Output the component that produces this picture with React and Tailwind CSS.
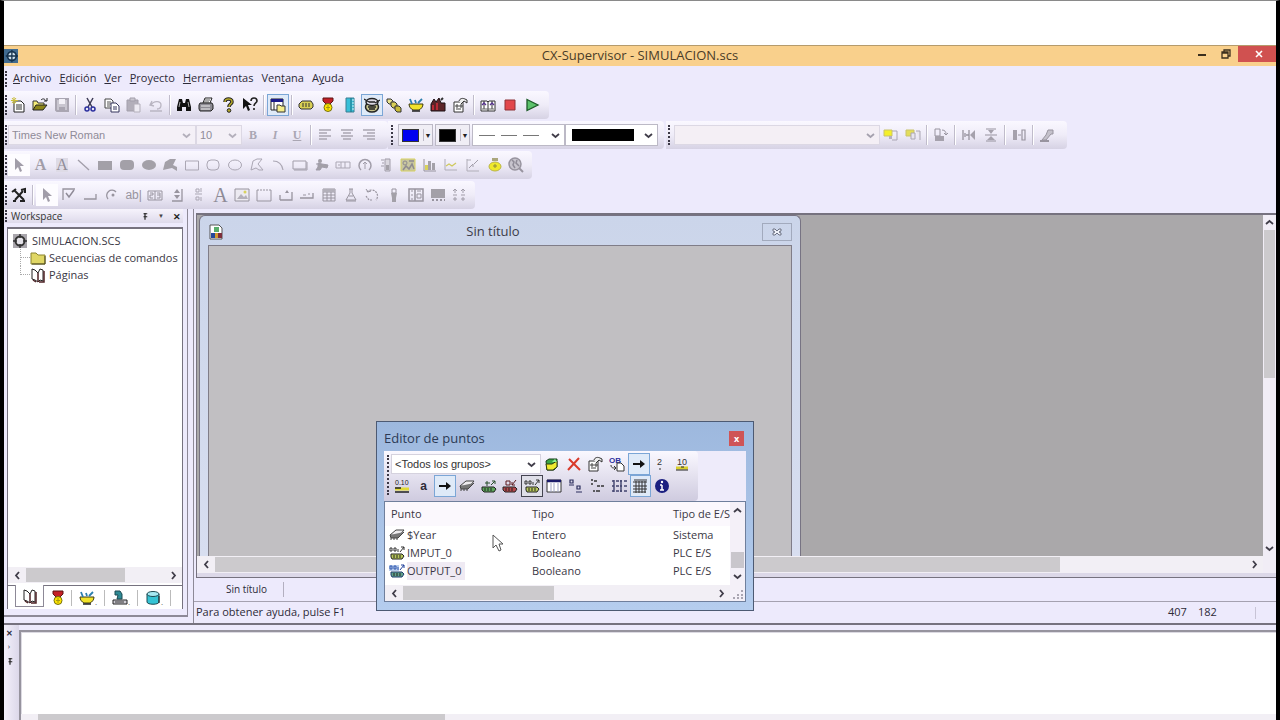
import React, { useState } from 'react';

// 16x16 glyphs, keyed by command
const GLYPHS = {
  new: <><path d="M4 4h7l3 3v8H4z" fill="#fff" stroke="#222" /><path d="M6 8h6M6 10h6M6 12h6" stroke="#333" /><path d="M4 0v7M1 3.500h7M2 1l4 5M6 1L2 6" stroke="#c9bd3a" /></>,
  open: <><path d="M1 13V4h4l1 2h6v3" fill="#f4ec7a" stroke="#333" /><path d="M1 13l3-5h11l-4 5z" fill="#8d8618" stroke="#222" /><path d="M9 3c2-2 4-1 5 1M15 1v3h-3" fill="none" stroke="#222" /></>,
  save: <><path d="M2 2h12v12H3l-1-1z" fill="#c9c6d0" stroke="#aaa6b2" strokeWidth="2" /><path d="M5 2h6v5H5z" fill="#f3f1f7" /><path d="M5 10h6v4H5z" fill="#a9a5b1" /></>,
  cut: <><path d="M5 1l5 9M11 1L6 10" stroke="#3c3a55" strokeWidth="1.500" /><circle cx="5" cy="12" r="2" fill="none" stroke="#2b2f9e" strokeWidth="1.500" /><circle cx="11" cy="12" r="2" fill="none" stroke="#2b2f9e" strokeWidth="1.500" /></>,
  copy: <><path d="M1 2h6l2 2v7H1z" fill="#fff" stroke="#444" /><path d="M3 5h4M3 7h4M3 9h3" stroke="#555" /><path d="M7 6h5l3 3v6H7z" fill="#fff" stroke="#34345c" /><path d="M9 10h4M9 12h4" stroke="#34345c" /></>,
  paste: <><path d="M1 3h11v11H1z" fill="#b3afba" stroke="#a39fab" /><path d="M4 1h5v3H4z" fill="#c9c6cf" stroke="#a39fab" /><path d="M8 7h6v8H8z" fill="#eeebf3" stroke="#b3afba" /></>,
  undo: <path d="M4 4L2 8l4 1M3 8c3-5 10-4 10 0 0 3-2 4-4 4M2 14h12" fill="none" stroke="#b9b5c2" strokeWidth="1.300" />,
  find: <><path d="M3 2h3l1 4h2l1-4h3l2 8v4h-5v-4H6v4H1v-4z" fill="#111" /><path d="M4 5l-1 5M12 5l1 5" stroke="#aaa" /></>,
  print: <><path d="M5 6l2-5h7l-2 5" fill="#fff" stroke="#222" /><path d="M7 3h5M6 5h5" stroke="#555" /><path d="M2 6h12l1 2v4l-2 2H2l-1-2V8z" fill="#8c8a92" stroke="#222" /><path d="M3 9h9M3 12h9" stroke="#eee" /></>,
  help: <><path d="M5 5c0-4 7-4 7 0 0 2-3 2-3 5" fill="none" stroke="#222" strokeWidth="3.500" /><path d="M5 5c0-4 7-4 7 0 0 2-3 2-3 5" fill="none" stroke="#b5a92a" strokeWidth="1.500" /><circle cx="9" cy="13.500" r="1.800" fill="#b5a92a" stroke="#222" /></>,
  context: <><path d="M1 1v11l3-3 2 5 2-1-2-5h4z" fill="#111" /><path d="M9 4c0-4 6-4 6 0 0 2-3 2-3 5M12 11v2" fill="none" stroke="#222" strokeWidth="1.600" /></>,
  workspace: <><path d="M1 2h12v11H1z" fill="#fff" stroke="#222" /><path d="M1 2h12v3H1z" fill="#1b1b8a" /><path d="M4 5v8" stroke="#222" /><path d="M7 8h3l1 1h4v6H7z" fill="#f5ee8a" stroke="#333" /></>,
  tag: <><path d="M4 4h9l2 3v3l-2 2H3l-2-2V7z" fill="#d9cf55" stroke="#333" /><path d="M5 6v4M8 6v4M11 6v4" stroke="#333" /></>,
  medal: <><path d="M3 1h10v3l-3 3H6L3 4z" fill="#c42127" stroke="#5c1414" /><circle cx="8" cy="10.500" r="4" fill="#ffe500" stroke="#75700f" /><path d="M8 8v5M6 10.500h4" stroke="#a59a10" /></>,
  strip: <><path d="M4 1h8v14H4z" fill="#38bfd8" stroke="#3a7f92" /><path d="M9 1v14" stroke="#1b6f82" /><path d="M10 3h2M10 6h2M10 9h2M10 12h2" stroke="#d9f4fa" /></>,
  database: <><ellipse cx="8" cy="10" rx="6.500" ry="5" fill="#c6c289" stroke="#222" strokeWidth="1.500" /><ellipse cx="8" cy="5" rx="6" ry="3.500" fill="#dedbe6" stroke="#222" strokeWidth="1.500" /><path d="M0 2l5 3M16 3l-5 3M5 5h6M4 10h8M5 12h6" stroke="#222" strokeWidth="1.300" /></>,
  chain: <><path d="M1 2h4l2 2v3H3L1 5z" fill="#eae48f" stroke="#333" /><path d="M5 5h4l2 2v4H7L5 9z" fill="#d9cf55" stroke="#333" /><path d="M9 9h4l2 2v4h-4l-2-2z" fill="#c9bd3a" stroke="#333" /></>,
  bowl: <><path d="M1 7h14c0 3-2 5-4 6H5C3 12 1 10 1 7z" fill="#f2e32a" stroke="#3d3a10" /><path d="M4 7L2 2M8 6L7 3M10 6l4-4" stroke="#2c7fae" strokeWidth="1.800" /><path d="M4 14h8" stroke="#222" strokeWidth="1.500" /></>,
  factory: <><path d="M1 7l3-5 2 3 3-4 2 5h4v8H1z" fill="#5c2428" stroke="#1c1114" /><path d="M3 8v5M7 6v7" stroke="#b82a35" strokeWidth="2" /><path d="M11 3l2-2" stroke="#333" strokeWidth="2" /></>,
  props: <><path d="M2 5h9v10H2z" fill="#fff" stroke="#333" /><path d="M4 8h2v2H4zM8 8h2v2H8zM4 12h5" fill="none" stroke="#444" /><path d="M7 4c1-3 4-3 6-2l2 1v3l-3-2-3 3" fill="#eee" stroke="#333" /></>,
  compile: <><path d="M1 4h6l1 1 1-1h6v10H1z" fill="#fff" stroke="#333" /><path d="M8 4v10M4 4v8M12 4v8" stroke="#333" /><path d="M2 8l2-2 2 2M10 8l2-2 2 2" fill="none" stroke="#55308f" strokeWidth="1.300" /><path d="M2 12h12" stroke="#666" /></>,
  stop: <path d="M3 3h10v10H3z" fill="#e2474a" stroke="#8d3236" />,
  play: <path d="M3 2.500l11 5.500-11 5.500z" fill="#5cc26b" stroke="#1d5a28" strokeWidth="1.300" />,
  alignLeft: <path d="M2 3h12M2 6h8M2 9h12M2 12h8" stroke="#aaa6b3" strokeWidth="1.300" />,
  alignCenter: <path d="M2 3h12M4 6h8M2 9h12M4 12h8" stroke="#aaa6b3" strokeWidth="1.300" />,
  alignRight: <path d="M2 3h12M6 6h8M2 9h12M6 12h8" stroke="#aaa6b3" strokeWidth="1.300" />,
  front: <><path d="M9 4h5v9H9" fill="none" stroke="#aaa6b3" /><path d="M1 3h8v6H1z" fill="#f4ef2a" stroke="#c9c36a" /><path d="M6 9h3v3H6z" fill="#b5b1bd" /></>,
  back: <><path d="M1 3h8v6H1z" fill="#e3dd5a" stroke="#c9c36a" /><path d="M6 6h4v6H6zM11 4h4v9" fill="#e8e5ee" stroke="#aaa6b3" /></>,
  rotate: <><path d="M2 2h5v7H2z" fill="none" stroke="#98949f" /><path d="M2 9h9v5H2z" fill="#a5a1ac" /><path d="M9 3c3 0 4 2 4 4M11 6l2 2 2-2" fill="none" stroke="#98949f" /></>,
  flipH: <><path d="M2 3v10M8 3v10M4 6v4M5 8h3" fill="none" stroke="#98949f" strokeWidth="1.300" /><path d="M14 3v10L9 8z" fill="#a5a1ac" /></>,
  flipV: <><path d="M2 8h12M3 14h10M3 2h10" fill="none" stroke="#98949f" strokeWidth="1.200" /><path d="M5 3h6L8 7zM8 9l4 4H4z" fill="#a5a1ac" /></>,
  spread: <><path d="M2 3h4v10H2z" fill="#a5a1ac" /><path d="M11 3h3v10h-3zM7 8h3" fill="none" stroke="#98949f" strokeWidth="1.200" /></>,
  dropper: <><path d="M9 3h5v4h-2l-5 6H3l4-5z" fill="#c4c1cb" stroke="#98949f" /><path d="M1 14h9" stroke="#98949f" strokeWidth="2" /></>,
  pointer: <path d="M4 1v12l3-3 2 5 2-1-2-5h4z" fill="#a19da9" />,
  line: <path d="M2 3l11 10" stroke="#a19da9" strokeWidth="1.300" />,
  rectFill: <path d="M1 4h14v9H1z" fill="#a3a0a8" />,
  roundFill: <rect x="1" y="3" width="14" height="10" rx="4" fill="#a3a0a8" />,
  ellipseFill: <ellipse cx="8" cy="8" rx="7" ry="5" fill="#a3a0a8" />,
  polyFill: <path d="M3 5l5-3h6l-3 6 4 2v4l-5-3-9 2z" fill="#a3a0a8" />,
  rect: <path d="M1.500 4h13v9h-13z" fill="none" stroke="#aba7b4" />,
  round: <rect x="2" y="3" width="12" height="10" rx="4" fill="none" stroke="#aba7b4" />,
  ellipse: <ellipse cx="8" cy="8" rx="6.500" ry="5" fill="none" stroke="#aba7b4" />,
  poly: <path d="M2 13l2-9 4-2h5l-4 5 5 6h-4l-3-2z" fill="none" stroke="#aba7b4" />,
  arc: <path d="M3 4c6 0 9 3 10 9" fill="none" stroke="#aba7b4" strokeWidth="1.200" />,
  button: <path d="M1 4h13v8H1zM15 5v8H2" fill="none" stroke="#a19da9" />,
  toggle: <><circle cx="6" cy="4" r="2" fill="#a3a0a8" /><path d="M4 6l4 1 6 1-1 3-5-1-2 3H2l2-3z" fill="#a3a0a8" stroke="#a19da9" /><path d="M2 7h4" stroke="#a19da9" /></>,
  slider: <path d="M1 5h14v6H1zM6 5v6M10 5v6M3 8h2" fill="none" stroke="#aba7b4" />,
  gauge: <><path d="M4 13a6 6 0 118 0" fill="none" stroke="#a19da9" strokeWidth="1.500" /><path d="M8 12V5M6 7l2-2 2 2" fill="none" stroke="#a19da9" /></>,
  level: <><path d="M7 2h5v12H7z" fill="#dad7df" stroke="#a19da9" /><path d="M8 8h3v5H8z" fill="#a3a0a8" /><path d="M3 3h3M4 6h2M3 9h3" stroke="#a19da9" /></>,
  alarm: <><path d="M1 2h14v12H1z" fill="#c8c6a0" stroke="#d6d060" /><circle cx="5" cy="6" r="2" fill="none" stroke="#8f8b8f" /><path d="M9 4h5M3 13l3-4 3 3 3-5 2 5" fill="none" stroke="#8f8b8f" strokeWidth="1.500" /></>,
  chart: <><path d="M2 2v12h12" fill="none" stroke="#98949f" /><path d="M3 8h3v5H3z" fill="#d8d25c" /><path d="M6 4h3v9H6zM10 6h3v7h-3z" fill="#a3a0a8" /></>,
  trend: <><path d="M2 2v11h12" fill="none" stroke="#b0adb8" /><path d="M3 9l3-2 3 2 4-3" fill="none" stroke="#cfc95e" strokeWidth="1.300" /></>,
  scatter: <><path d="M2 2v12h12M2 3h4" fill="none" stroke="#b0adb8" /><path d="M4 11l4-4v3M9 7l4-4" fill="none" stroke="#a19da9" /></>,
  bag: <><path d="M5 1h6v3H5z" fill="#aaa67c" /><ellipse cx="8" cy="9.500" rx="6" ry="4.500" fill="#efe92a" stroke="#b9b44a" /><path d="M6 9h4M8 7v4" stroke="#8f8b3f" /></>,
  web: <><circle cx="7" cy="7" r="6" fill="#c7c4cd" stroke="#98949f" strokeWidth="1.500" /><path d="M4 3l2 2-1 3 2 3M9 3l-1 3 3 3" fill="none" stroke="#8f8b97" strokeWidth="1.500" /><path d="M11 11l4 4" stroke="#98949f" strokeWidth="2" /></>,
  tools: <><path d="M3 3l10 10M12 4L4 13" stroke="#222" strokeWidth="2" /><path d="M1 5l4-3M10 3l4-1v4M9 14h5M2 14h3" fill="none" stroke="#222" strokeWidth="2" /></>,
  check: <><path d="M2 13V2h12" fill="none" stroke="#98949f" strokeWidth="1.300" /><path d="M5 6l3 4 5-7" fill="none" stroke="#8f8b97" strokeWidth="1.500" /></>,
  push: <path d="M2 12h12V7" fill="none" stroke="#98949f" strokeWidth="1.300" />,
  radio: <><path d="M4 12a5 5 0 018-7" fill="none" stroke="#98949f" strokeWidth="1.300" /><circle cx="9" cy="8" r="1.500" fill="#98949f" /></>,
  group: <><path d="M1 4h14v9H1zM8 4v9" fill="none" stroke="#98949f" /><path d="M3 6h3v2H3v3h3M10 6h3v5h-3M10 8h3" fill="none" stroke="#98949f" /></>,
  spin: <><path d="M3 14h10V2" fill="none" stroke="#98949f" strokeWidth="1.300" /><path d="M8 2l3 4H5zM8 12l3-4H5z" fill="#98949f" /></>,
  updown: <path d="M5 2h3v3H5zM10 1v4M5 10h3v3H5zM10 10v4M4 7h7" fill="none" stroke="#aba7b4" />,
  image: <><path d="M1 2h14v12H1z" fill="#eceaf1" stroke="#98949f" /><path d="M3 12l4-5 3 3 2-2 2 4z" fill="#b3b0ba" /><circle cx="11" cy="5" r="1.500" fill="#d8d25c" /></>,
  frame: <path d="M1 14V3h2M15 14V3h-2M4 3h2M7 3h2M10 3h2M1 14h14" fill="none" stroke="#98949f" />,
  tabUp: <><path d="M2 13V8M2 13h12V5" fill="none" stroke="#98949f" strokeWidth="1.300" /><path d="M9 3l2 3H7z" fill="#98949f" /></>,
  tabRow: <><path d="M1 11h13V6" fill="none" stroke="#98949f" strokeWidth="1.300" /><path d="M4 8h3M9 7h2" stroke="#98949f" /></>,
  grid: <><path d="M2 2h12v12H2zM2 5h12M2 8h12M2 11h12M6 5v9M10 5v9" fill="none" stroke="#98949f" /><path d="M2 2h12v3H2z" fill="#b3b0ba" /></>,
  flask: <path d="M6 2h4M7 2v4l-4 7h10L9 6V2M6 9h4M3 14h10" fill="none" stroke="#98949f" />,
  dial: <><path d="M3 5a6 6 0 119 8M2 9l3 4h4" fill="none" stroke="#98949f" strokeDasharray="2 1" strokeWidth="1.200" /><path d="M2 2l2 3 3-1" fill="none" stroke="#98949f" /></>,
  thermo: <><path d="M6 2h4v4H6z" fill="none" stroke="#98949f" /><path d="M5 6h6l-1 5v4H6v-4z" fill="#a3a0a8" /></>,
  panel: <><path d="M1 2h14v12H1zM7 2v12" fill="none" stroke="#98949f" strokeWidth="1.500" /><path d="M9 4h4M9 7h4v4H9zM3 4h2M3 8h2M3 12h2" fill="none" stroke="#98949f" /></>,
  film: <><path d="M1 2h14v9H1z" fill="#a3a0a8" /><path d="M2 13h2M6 13h2M10 13h2M14 13h1" stroke="#98949f" strokeWidth="2" /></>,
  arrows: <path d="M2 4l2-2 2 2M4 2v4M10 4l2-2 2 2M12 2v4M2 8h4M10 8h4M2 12h4M4 10v4M10 12h4M12 10v4" fill="none" stroke="#a19da9" />,
  cycle: <><path d="M2 5l3-2h8v8l-3 3H3z" fill="#3aa545" stroke="#173d1b" /><path d="M2 8h6l5-3v6l-4 3H3z" fill="#f0ea2f" stroke="#2c3a10" /><path d="M8 6l3-3 2 3z" fill="#8df08d" /></>,
  remove: <path d="M3 3l11 11M13 2L2 14" stroke="#d93a2b" strokeWidth="2" />,
  rename: <><text x="0" y="7" fontSize="8" fontFamily="Liberation Sans, sans-serif" fontWeight="700" fill="#2b2f9e">OB</text><path d="M2 9c0 3 2 3 4 3M5 10l2 2-2 2" fill="none" stroke="#333" /><path d="M8 7h4l3 3v5H8z" fill="#fff" stroke="#333" /></>,
  arrow: <><path d="M2 8h8" stroke="#111" strokeWidth="2" /><path d="M9 4l5 4-5 4z" fill="#111" /></>,
  two: <><text x="5" y="9" fontSize="9" fontFamily="Liberation Sans, sans-serif" fill="#333">2</text><path d="M7 13h2" stroke="#333" /></>,
  ten: <><text x="3" y="9" fontSize="9" fontFamily="Liberation Sans, sans-serif" fill="#333">10</text><path d="M2 12h12" stroke="#d8cf2c" strokeWidth="3" /><path d="M2 14h12M7 11h3" stroke="#222" /></>,
  real: <><text x="1" y="7" fontSize="7" fontFamily="Liberation Sans, sans-serif" fill="#222">0.10</text><path d="M1 11h14" stroke="#e2da34" strokeWidth="3" /><path d="M1 10h6M1 14h14" stroke="#222" strokeWidth="1.500" /></>,
  memory: <><path d="M1 8l6-5h8l-5 6z" fill="#eeecef" stroke="#444" /><path d="M1 8l1 3h7l6-6" fill="#777" stroke="#444" /><path d="M2 11v2M5 11v2M8 11v2" stroke="#444" /></>,
  input: <><path d="M1 9h12l2 2-2 3H3l-2-2z" fill="#5da55a" stroke="#222" /><path d="M4 5h5M6 3v5M10 7l4-4M11 3h3v3" fill="none" stroke="#284f2a" /><path d="M4 10v3M7 10v3M10 10v3" stroke="#222" /></>,
  output: <><path d="M1 9h12l2 2-2 3H3l-2-2z" fill="#b5484c" stroke="#222" /><path d="M4 3h4v4H4zM14 2l-4 5M10 4v3h3" fill="none" stroke="#5c1b1e" /><path d="M4 10v3M7 10v3M10 10v3" stroke="#222" /></>,
  io: <><path d="M2 9h11l2 2-2 3H3l-1-2z" fill="#b8c85a" stroke="#222" /><path d="M1 3h2v3H1zM5 3h2v3H5zM9 4v3M11 7l4-5M12 2h3v3" fill="none" stroke="#333" /><path d="M5 10v3M8 10v3M11 10v3" stroke="#222" /></>,
  ioSel: <><path d="M2 9h11l2 2-2 3H3l-1-2z" fill="#5fa08a" stroke="#1d3a6e" /><path d="M1 3h2v3H1zM5 3h2v3H5zM9 4v3M11 7l4-5M12 2h3v3" fill="none" stroke="#1f3f9a" /><path d="M0 2h10v6H0z" fill="#4d7fd0" opacity=".4" /><path d="M5 10v3M8 10v3M11 10v3" stroke="#222" /></>,
  table: <><path d="M1 2h14v12H1z" fill="#fff" stroke="#333" /><path d="M1 3h14" stroke="#1b1b6a" strokeWidth="2.500" /><path d="M5 5v9M8 5v9M12 5v9" stroke="#9fa3c4" /></>,
  largeIcons: <path d="M3 2h3v3H3zM2 7h5M10 8h3v3h-3zM9 14h6" fill="none" stroke="#2b2d5c" strokeWidth="1.200" />,
  smallIcons: <path d="M2 2h2M5 3h3M2 6h2M8 8h3M12 8h3M4 13h2M7 13h4" stroke="#333" strokeWidth="1.500" />,
  list: <path d="M1 3h2M5 3h3M9 3h2M13 3h3M1 8h2M5 8h3M9 8h2M13 8h3M1 13h2M5 13h3M9 13h2M13 13h3M3 2v12M10 2v12" stroke="#41436e" strokeWidth="1.400" />,
  details: <path d="M2 2h13M1 4h14M1 8h14M1 11h14M1 14h13M4 3v12M7 3v12M10 3v12M13 3v12" stroke="#333" />,
  info: <><circle cx="8" cy="8" r="7" fill="#1b1f80" /><path d="M8 7v5M6 7h2M6 12h4" stroke="#fff" strokeWidth="1.500" /><circle cx="8" cy="4" r="1.200" fill="#fff" /></>,
  project: <><path d="M1 1h14v14H1z" fill="#a9a6ac" /><circle cx="8" cy="8" r="4.500" fill="#e4e2e8" stroke="#333" strokeWidth="2" /><path d="M8 1v4M8 11v4M1 8h4M11 8h4" stroke="#333" strokeWidth="1.500" /></>,
  folder: <><path d="M1 3h5l2 2h7v9H1z" fill="#e0d765" stroke="#8a8430" /><path d="M15 6v8H2" fill="none" stroke="#4a4720" /></>,
  book: <><path d="M2 2l3 1 3 3 2-4 3 1v11l-3-1-2 2-3-2-3-1z" fill="#fff" stroke="#222" /><path d="M8 6v9M14 4v11H9M3 13l3 2" fill="none" stroke="#4d2226" strokeWidth="1.500" /></>,
  device: <><path d="M1 10h14v4H1z" fill="#d0ced6" stroke="#222" /><path d="M3 1h5l2 3v5H5l1-4H3z" fill="#2f8a94" stroke="#1d4a52" /><path d="M3 12h9" stroke="#333" /></>,
  cylinder: <><path d="M2 4v8c0 3 12 3 12 0V4" fill="#35c3d4" stroke="#1d4a52" /><ellipse cx="8" cy="4" rx="6" ry="2.500" fill="#a5e9f2" stroke="#1d4a52" /><path d="M14 6v7" stroke="#222" /></>,
  page: <><path d="M2 1h9l3 3v11H2z" fill="#fff" stroke="#555" /><path d="M3 9h4v5H3z" fill="#24489a" /><path d="M6 3h5v5H6z" fill="#58ad6a" /><path d="M7 9h3v5H7z" fill="#d1992f" /><path d="M10 9h4v5h-4z" fill="#7d2f3c" /></>,
  app: <><path d="M0 0h16v16H0z" fill="#416b90" /><circle cx="9" cy="8" r="5" fill="#cfe0ec" stroke="#16334e" strokeWidth="2" /><path d="M9 1v14M2 8h14" stroke="#16334e" strokeWidth="1.500" /></>,
  pin: <path d="M8 4v5M6 9h5M8 9v4M6 5h5" stroke="#222" strokeWidth="1.600" />,
};

function Glyph({ name, size = 'size-4' }) {
  return <svg viewBox="0 0 16 16" className={`${size} shrink-0`} aria-hidden="true">{GLYPHS[name]}</svg>;
}

function Tool({ name, pressed, children }) {
  const look = pressed === 'blue' ? 'border-[#7ba6d6] bg-[#dfeaf8]'
    : pressed === 'dark' ? 'border-[#444450] bg-[#dfdfe8]'
    : pressed === 'light' ? 'border-transparent bg-[#fdfcff]'
    : 'border-transparent';
  return (
    <button type="button" aria-label={name} className={`flex h-[22px] w-[22px] min-w-0 shrink items-center justify-center border ${look}`}>
      {children || <Glyph name={name} />}
    </button>
  );
}

const Sep = () => <span className="mx-[2px] h-5 w-[2px] shrink-0 border-l border-[#c0bccb] bg-white" />;

const Grip = ({ className = 'h-5' }) => <span className={`w-0 shrink-0 border-l-2 border-dotted border-[#3b3846] ${className}`} />;

function Bar({ children, className = '' }) {
  return (
    <div className={`flex h-7 items-center rounded-r bg-linear-to-b from-[#faf8ff] via-[#efecf8] to-[#d6d2e4] ${className}`}>
      {children}
    </div>
  );
}

function Chevron({ dir, className = 'text-[#3f3c48]' }) {
  const paths = { left: 'M6 1L3 4.500 6 8', right: 'M3 1l3 3.500L3 8', up: 'M1 6l3.500-3L8 6', down: 'M1 3l3.500 3L8 3' };
  return (
    <svg viewBox="0 0 9 9" className={`size-[9px] shrink-0 ${className}`} aria-hidden="true">
      <path d={paths[dir]} fill="none" stroke="currentColor" strokeWidth="1.800" />
    </svg>
  );
}

function HScroll({ thumb, className = '' }) {
  return (
    <div className={`flex items-center bg-[#f2eff5] ${className}`}>
      <button type="button" aria-label="Desplazar a la izquierda" className="flex w-[18px] shrink-0 justify-center"><Chevron dir="left" /></button>
      <div className="flex h-full flex-1 items-stretch">
        <div className={`my-px bg-[#cccacd] ${thumb}`} />
      </div>
      <button type="button" aria-label="Desplazar a la derecha" className="flex w-[18px] shrink-0 justify-center"><Chevron dir="right" /></button>
    </div>
  );
}

function Combo({ label, value, options, onChange, className, children, chevron = 'text-[#3f3c48]' }) {
  return (
    <div className={`relative flex items-center border ${className}`}>
      <select aria-label={label} value={value} onChange={onChange} className="h-full w-full appearance-none pl-[3px] outline-none">
        {options.map(o => <option key={o} value={o}>{o}</option>)}
      </select>
      <span className="pointer-events-none absolute inset-y-0 left-1 flex items-center">{children}</span>
      <span className="pointer-events-none absolute inset-y-0 right-1 flex items-center"><Chevron dir="down" className={chevron} /></span>
    </div>
  );
}

function ColorButton({ label, color }) {
  return (
    <button type="button" aria-label={label} className="mr-[2px] flex h-[22px] w-[35px] shrink-0 items-center border border-[#bcb9c6] bg-[#f0eef5] pl-[3px]">
      <span className={`h-[13px] w-[17px] border border-[#333] ${color}`} />
      <span className="ml-1 flex h-3 flex-1 items-center justify-center border-l border-[#bcb9c6] text-[7px] leading-none text-[#222]">▼</span>
    </button>
  );
}

const MENU = [['', 'A', 'rchivo'], ['', 'E', 'dición'], ['', 'V', 'er'], ['', 'P', 'royecto'], ['', 'H', 'erramientas'], ['Ven', 't', 'ana'], ['A', 'y', 'uda']];

const DRAW_TOOLS = ['line', 'rectFill', 'roundFill', 'ellipseFill', 'polyFill', 'rect', 'round', 'ellipse', 'poly', 'arc', 'button', 'toggle', 'slider', 'gauge', 'level', 'alarm', 'chart', 'trend', 'scatter', 'bag', 'web'];

const CONTROLS_A = ['check', 'push', 'radio'];
const CONTROLS_B = ['group', 'spin', 'updown'];
const CONTROLS_C = ['image', 'frame', 'tabUp', 'tabRow', 'grid', 'flask', 'dial', 'thermo', 'panel', 'film', 'arrows'];

function Toolbars() {
  const [font, setFont] = useState('Times New Roman');
  const [size, setSize] = useState('10');

  return (
    <div className="flex flex-col gap-[2px] font-['Liberation_Sans',sans-serif] text-[11px]">
      <div className="flex">
        <Bar className="w-[545px] pl-px">
          <Grip />
          <div className="flex items-center">
            {['new', 'open', 'save'].map(n => <Tool key={n} name={n} />)}
            <Sep />
            {['cut', 'copy', 'paste', 'undo'].map(n => <Tool key={n} name={n} />)}
            <Sep />
            {['find', 'print', 'help', 'context'].map(n => <Tool key={n} name={n} />)}
            <Sep />
            <Tool name="workspace" pressed="blue" />
            <Sep />
            {['tag', 'medal', 'strip'].map(n => <Tool key={n} name={n} />)}
            <Tool name="database" pressed="blue" />
            {['chain', 'bowl', 'factory', 'props'].map(n => <Tool key={n} name={n} />)}
            <Sep />
            {['compile', 'stop', 'play'].map(n => <Tool key={n} name={n} />)}
          </div>
        </Bar>
      </div>

      <div className="flex">
        <Bar className="w-[384px] pl-px">
          <Grip />
          <Combo label="Fuente" value={font} onChange={e => setFont(e.target.value)} options={['Times New Roman', 'Arial']} chevron="text-[#b3afbb]" className="ml-px h-5 w-[188px] border-[#dcd8e4] bg-[#f4f0f7] text-[#8f8b98]" />
          <Combo label="Tamaño" value={size} onChange={e => setSize(e.target.value)} options={['10', '12', '14']} chevron="text-[#b3afbb]" className="h-5 w-[46px] border-[#dcd8e4] bg-[#f4f0f7] text-[#8f8b98]" />
          <div className="flex items-center font-['Liberation_Serif',serif] text-[12px] font-bold text-[#aaa6b3]">
            <Tool name="Negrita">B</Tool>
            <Tool name="Cursiva"><i>I</i></Tool>
            <Tool name="Subrayado"><u>U</u></Tool>
          </div>
          <Sep />
          {['alignLeft', 'alignCenter', 'alignRight'].map(n => <Tool key={n} name={n} />)}
        </Bar>
        <Bar className="w-[276px] pl-[3px]">
          <Grip className="mr-[5px] h-5" />
          <ColorButton label="Color de relleno" color="bg-[#0000f0]" />
          <ColorButton label="Color de línea" color="bg-black" />
          <Combo label="Estilo de línea" value="" options={['']} className="h-[22px] w-[93px] border-[#bcb9c6] bg-white">
            <span className="flex gap-[6px] pl-[2px]">
              <span className="h-px w-4 bg-[#777]" /><span className="h-px w-4 bg-[#777]" /><span className="h-px w-4 bg-[#777]" />
            </span>
          </Combo>
          <Combo label="Grosor de línea" value="" options={['']} className="h-[22px] w-[93px] border-[#bcb9c6] bg-white">
            <span className="ml-[2px] h-3 w-[62px] bg-black" />
          </Combo>
        </Bar>
        <Bar className="ml-[2px] w-[401px] pl-[2px]">
          <Grip className="mr-1 h-5" />
          <Combo label="Objeto" value="" options={['']} chevron="text-[#a5a1ae]" className="h-5 w-[206px] border-[#dcd8e4] bg-[#f4eff5]" />
          {['front', 'back'].map(n => <Tool key={n} name={n} />)}
          <Sep />
          <Tool name="rotate" />
          <Sep />
          {['flipH', 'flipV'].map(n => <Tool key={n} name={n} />)}
          <Sep />
          <Tool name="spread" />
          <Sep />
          <Tool name="dropper" />
        </Bar>
      </div>

      <div className="flex">
        <Bar className="w-[528px] pl-px">
          <Grip />
          <div className="flex w-[520px] items-center pl-px">
            <Tool name="pointer" pressed="light" />
            <Tool name="Texto"><span className="font-['Liberation_Serif',serif] text-[16px] font-bold text-[#a19da9]">A</span></Tool>
            <Tool name="Bloque de texto"><span className="bg-[#dedbe6] font-['Liberation_Serif',serif] text-[16px] leading-[14px] text-[#8f8b97]">A</span></Tool>
            {DRAW_TOOLS.map(n => <Tool key={n} name={n} />)}
          </div>
        </Bar>
      </div>

      <div className="flex">
        <Bar className="w-[471px] pl-px">
          <Grip />
          <div className="flex items-center pl-px">
            <Tool name="tools" />
            <Sep />
          </div>
          <div className="flex w-[434px] items-center">
            <Tool name="pointer" pressed="light" />
            {CONTROLS_A.map(n => <Tool key={n} name={n} />)}
            <Tool name="Cuadro de texto"><span className="text-[12px] text-[#98949f]">ab|</span></Tool>
            {CONTROLS_B.map(n => <Tool key={n} name={n} />)}
            <Tool name="Etiqueta"><span className="font-['Liberation_Serif',serif] text-[20px] text-[#8f8b97]">A</span></Tool>
            {CONTROLS_C.map(n => <Tool key={n} name={n} />)}
          </div>
        </Bar>
      </div>
    </div>
  );
}

function Workspace() {
  return (
    <aside className="mb-[6px] flex w-[184px] shrink-0 flex-col border-r border-b-2 border-[#8d8997] pr-1 pb-[6px]">
      <div className="flex h-[14px] shrink-0 items-center gap-1 bg-linear-to-b from-[#f6f3fc] to-[#dedaeb] pl-px">
        <Grip className="h-3" />
        <h2 className="flex-1 text-[10px] leading-none text-[#333]">Workspace</h2>
        <button type="button" aria-label="Fijar"><Glyph name="pin" size="size-3" /></button>
        <span className="w-3 text-center text-[6px] text-[#444]">▼</span>
        <button type="button" aria-label="Cerrar" className="w-3 text-[9px] font-bold leading-none text-[#222]">✕</button>
      </div>

      <div className="mt-1 ml-[3px] flex flex-1 flex-col border-x border-t-2 border-[#76727f] bg-white pt-[3px]">
        <ul className="flex-1 overflow-hidden pl-1 text-[11px] leading-[17px] text-[#3a3744]">
          <li className="flex items-center gap-1"><Glyph name="project" /><span>SIMULACION.SCS</span></li>
          <li className="ml-2 flex items-center border-l border-dotted border-[#aaa] whitespace-nowrap">
            <span className="w-[9px] border-t border-dotted border-[#aaa]" />
            <Glyph name="folder" /><span className="pl-[3px]">Secuencias de comandos</span>
          </li>
          <li className="ml-2 flex items-center">
            <span className="h-[9px] w-[10px] self-start border-b border-l border-dotted border-[#aaa]" />
            <Glyph name="book" /><span className="pl-[3px]">Páginas</span>
          </li>
        </ul>
        <HScroll className="h-4" thumb="w-[99px]" />
        <div className="mt-[2px] flex h-[24px] items-center border-t border-[#76727f] pl-[7px]">
          <button type="button" aria-label="Páginas" className="-mt-[3px] flex h-[22px] w-[29px] items-center justify-center border-x border-b border-[#8d8997] bg-white"><Glyph name="book" /></button>
          <button type="button" aria-label="Alarmas" className="flex w-7 justify-center border-r border-[#bbb]"><Glyph name="medal" /></button>
          {['bowl', 'device', 'cylinder'].map(n => (
            <button key={n} type="button" aria-label={n} className="flex w-[33px] items-end justify-center border-r border-[#bbb] text-[8px] leading-none text-[#555]"><Glyph name={n} />.</button>
          ))}
        </div>
      </div>
    </aside>
  );
}

function PageWindow() {
  return (
    <section className="ml-[2px] flex w-[602px] shrink-0 flex-col rounded-t-md border border-b-0 border-[#777383] bg-linear-to-b from-[#cbd5ea] to-[#d8def0] px-[8px]">
      <header className="flex h-[29px] shrink-0 items-center pt-[3px]">
        <Glyph name="page" />
        <h2 className="flex-1 text-center text-[13px] text-[#3c3b48]">Sin título</h2>
        <button type="button" aria-label="Cerrar página" className="flex h-[18px] w-[30px] items-center justify-center border border-[#a2aabd]">
          <svg viewBox="0 0 10 8" className="h-2 w-[10px]" aria-hidden="true">
            <path d="M1 1h2l2 2 2-2h2v2L7 4l2 1v2H7L5 5 3 7H1V5l2-1-2-1z" fill="#eef1f8" stroke="#6d7284" />
          </svg>
        </button>
      </header>
      <div className="flex-1 border border-b-0 border-[#807d88] bg-[#c1bfc2]" />
    </section>
  );
}

const POINTS = [
  { icon: 'memory', name: '$Year', type: 'Entero', io: 'Sistema' },
  { icon: 'io', name: 'IMPUT_0', type: 'Booleano', io: 'PLC E/S' },
  { icon: 'ioSel', name: 'OUTPUT_0', type: 'Booleano', io: 'PLC E/S', selected: true },
];

function PointEditor() {
  const [group, setGroup] = useState('<Todos los grupos>');

  return (
    <section role="dialog" aria-label="Editor de puntos" className="absolute top-[420px] left-[372px] flex h-[190px] w-[378px] flex-col border border-[#4d5a73] bg-linear-to-b from-[#9db8de] to-[#b5cdee] px-[7px] pb-2">
      <header className="flex h-[29px] shrink-0 items-center justify-between pt-1 pr-[2px]">
        <h2 className="text-[13px] text-[#2c3a55]">Editor de puntos</h2>
        <button type="button" aria-label="Cerrar editor" className="flex h-[15px] w-[15px] items-center justify-center bg-[#cf5456] text-[9px] font-bold leading-none text-white">x</button>
      </header>

      <div className="shrink-0 bg-[#eeebfa]">
        <div className="flex h-[50px] w-[314px] rounded-r bg-linear-to-b from-[#faf8ff] to-[#cfcbdf] pt-[2px] pl-[3px]">
          <Grip className="mt-[2px] h-10" />
          <div className="flex flex-col pl-[2px]">
            <div className="flex items-center">
              <Combo label="Grupo" value={group} onChange={e => setGroup(e.target.value)} options={['<Todos los grupos>', 'Sistema']} className="h-5 w-[150px] shrink-0 border-[#d5d2de] bg-white font-['Liberation_Sans',sans-serif] text-[11px] text-[#333]" />
              <div className="flex w-[152px]">
                {['cycle', 'remove', 'props', 'rename'].map(n => <Tool key={n} name={n} />)}
                <Tool name="arrow" pressed="blue" />
                <Tool name="two" />
                <Tool name="ten" />
              </div>
            </div>
            <div className="flex w-[282px]">
              <Tool name="real" />
              <Tool name="Texto"><b className="font-['Liberation_Sans',sans-serif] text-[12px] leading-none">a</b></Tool>
              <Tool name="arrow" pressed="blue" />
              {['memory', 'input', 'output'].map(n => <Tool key={n} name={n} />)}
              <Tool name="io" pressed="dark" />
              {['table', 'largeIcons', 'smallIcons', 'list'].map(n => <Tool key={n} name={n} />)}
              <Tool name="details" pressed="blue" />
              <Tool name="info" />
            </div>
          </div>
        </div>
      </div>

      <div className="flex min-h-0 flex-1 flex-col border border-[#6f7f9c] bg-white">
        <div className="flex min-h-0 flex-1">
          <div className="min-w-0 flex-1 overflow-hidden">
            <table className="w-full table-fixed text-left text-[11px] leading-[18px] text-[#3a3744]">
              <thead>
                <tr className="h-6 bg-[#fbf8fd]">
                  <th className="w-[141px] pl-[6px] font-normal">Punto</th>
                  <th className="w-[141px] pl-[6px] font-normal">Tipo</th>
                  <th className="pl-[6px] font-normal whitespace-nowrap">Tipo de E/S</th>
                </tr>
              </thead>
              <tbody>
                {POINTS.map(p => (
                  <tr key={p.name}>
                    <td className="pl-1">
                      <span className="flex items-center gap-[2px]">
                        <Glyph name={p.icon} />
                        <span className={p.selected ? 'bg-[#efeaf3] pr-1' : ''}>{p.name}</span>
                      </span>
                    </td>
                    <td className="pl-[6px]">{p.type}</td>
                    <td className="pl-[6px]">{p.io}</td>
                  </tr>
                ))}
              </tbody>
            </table>
          </div>
          <div className="flex w-[15px] flex-col items-center bg-[#f4f0f8] py-1">
            <button type="button" aria-label="Subir"><Chevron dir="up" /></button>
            <div className="mt-auto mb-1 h-4 w-[13px] bg-[#c9c6cc]" />
            <button type="button" aria-label="Bajar"><Chevron dir="down" /></button>
          </div>
        </div>
        <div className="flex h-[16px] shrink-0 bg-[#f4f0f8]">
          <HScroll className="flex-1" thumb="w-[151px]" />
          <svg viewBox="0 0 15 16" className="w-[15px]" aria-hidden="true">
            <path d="M12 5v2M12 9v2M8 9v2M12 12v2M8 12v2M4 12v2" stroke="#aaa6b2" strokeWidth="2" />
          </svg>
        </div>
      </div>

      <svg viewBox="0 0 12 18" className="absolute top-[112px] left-[115px] h-[18px] w-3" aria-hidden="true">
        <path d="M1 1v13l3-3 3 6 2-1-2-6h4z" fill="#fff" stroke="#555" />
      </svg>
    </section>
  );
}

export default function App() {
  return (
    <div className="relative flex h-screen flex-col overflow-hidden border-x-4 border-t border-x-black border-t-[#8a8a8a] bg-[#edeafc] font-['Open_Sans','Noto_Sans',sans-serif] text-[#2e2b38]">
      <div className="h-11 shrink-0 bg-white" />

      <header className="flex h-[21px] shrink-0 items-center border-t border-[#b59b6c] bg-[#f9d08c]">
        <span className="flex w-[86px] items-center"><Glyph name="app" size="size-[14px]" /></span>
        <h1 className="flex-1 pb-[2px] text-center text-[13px] leading-none text-[#4a3c28]">CX-Supervisor - SIMULACION.scs</h1>
        <div className="flex h-full w-[86px] items-start">
          <button type="button" aria-label="Minimizar" className="flex h-4 w-6 items-center justify-center"><span className="mt-[2px] h-[2px] w-2 bg-[#3b2f1d]" /></button>
          <button type="button" aria-label="Restaurar" className="flex h-4 w-6 items-center justify-center">
            <svg viewBox="0 0 10 10" className="size-[10px]" aria-hidden="true"><path d="M3 3V1h6v6H7M1 3h6v6H1zM1 4h6" fill="none" stroke="#3b2f1d" strokeWidth="1.300" /></svg>
          </button>
          <button type="button" aria-label="Cerrar" className="flex h-4 flex-1 items-center justify-center bg-[#d05150] pl-1">
            <svg viewBox="0 0 8 8" className="size-2" aria-hidden="true"><path d="M1 1l6 6M7 1L1 7" stroke="#fff" strokeWidth="1.600" /></svg>
          </button>
        </div>
      </header>

      <nav className="flex h-[25px] shrink-0 items-center pl-px text-[11px]">
        <Grip className="h-4" />
        <ul className="flex gap-2 pl-[6px]">
          {MENU.map(([pre, key, post]) => (
            <li key={key}><button type="button">{pre}<u>{key}</u>{post}</button></li>
          ))}
        </ul>
      </nav>

      <Toolbars />

      <div className="flex min-h-0 flex-1">
        <Workspace />
        <main className="ml-[5px] flex min-w-0 flex-1 flex-col border-l border-[#8d8997]">
          <div className="mt-1 ml-[2px] flex min-h-0 flex-1 flex-col border-t-2 border-b border-l border-[#76727f]">
            <div className="flex min-h-0 flex-1 bg-[#aaa8aa]">
              <div className="flex min-w-0 flex-1"><PageWindow /></div>
              <div className="flex w-[13px] shrink-0 flex-col items-center bg-[#f1edf6]">
                <button type="button" aria-label="Subir" className="flex h-[15px] items-center"><Chevron dir="up" /></button>
                <div className="h-[148px] w-[11px] bg-[#cccacd]" />
                <button type="button" aria-label="Bajar" className="mt-auto flex h-[15px] items-center"><Chevron dir="down" /></button>
              </div>
            </div>
            <div className="flex h-[17px] shrink-0 bg-[#f1edf6]">
              <HScroll className="flex-1" thumb="w-[82%]" />
              <span className="w-[13px]" />
            </div>
            <div className="h-[4px] shrink-0 bg-[#dcd8e8]" />
          </div>
          <div className="flex h-6 shrink-0 items-center border-b border-[#a5a1b0] text-[10px]">
            <button type="button" className="w-[90px] border-r border-[#b3afc0] pl-[16px]">Sin título</button>
          </div>
          <footer className="flex h-[21px] shrink-0 items-center pl-[2px] text-[11px]">
            <span className="flex-1">Para obtener ayuda, pulse F1</span>
            <span className="w-[30px]">407</span>
            <span className="w-[57px]">182</span>
            <span className="h-3 w-[21px] border-l border-[#c8c4d6]" />
          </footer>
        </main>
      </div>

      <section className="flex h-[97px] shrink-0 border-t-2 border-[#76727f]">
        <div className="flex w-[15px] flex-col items-start gap-[5px] bg-linear-to-r from-[#f3f0fb] to-[#dcd8ea] pt-1 pr-[3px]">
          <button type="button" aria-label="Cerrar panel" className="w-[10px] text-[8px] font-bold leading-none">✕</button>
          <span className="w-[10px] text-center text-[8px] leading-none">›</span>
          <button type="button" aria-label="Fijar panel"><Glyph name="pin" size="size-3" /></button>
        </div>
        <div className="mt-[5px] flex flex-1 flex-col border-t-2 border-l-2 border-[#96939e] bg-white">
          <div className="flex-1 border-t border-l border-[#dcdae2]" />
          <div className="flex h-[6px] bg-[#f2eff5] pl-[17px]"><span className="w-[407px] bg-[#cccacd]" /></div>
        </div>
      </section>

      <PointEditor />
    </div>
  );
}
